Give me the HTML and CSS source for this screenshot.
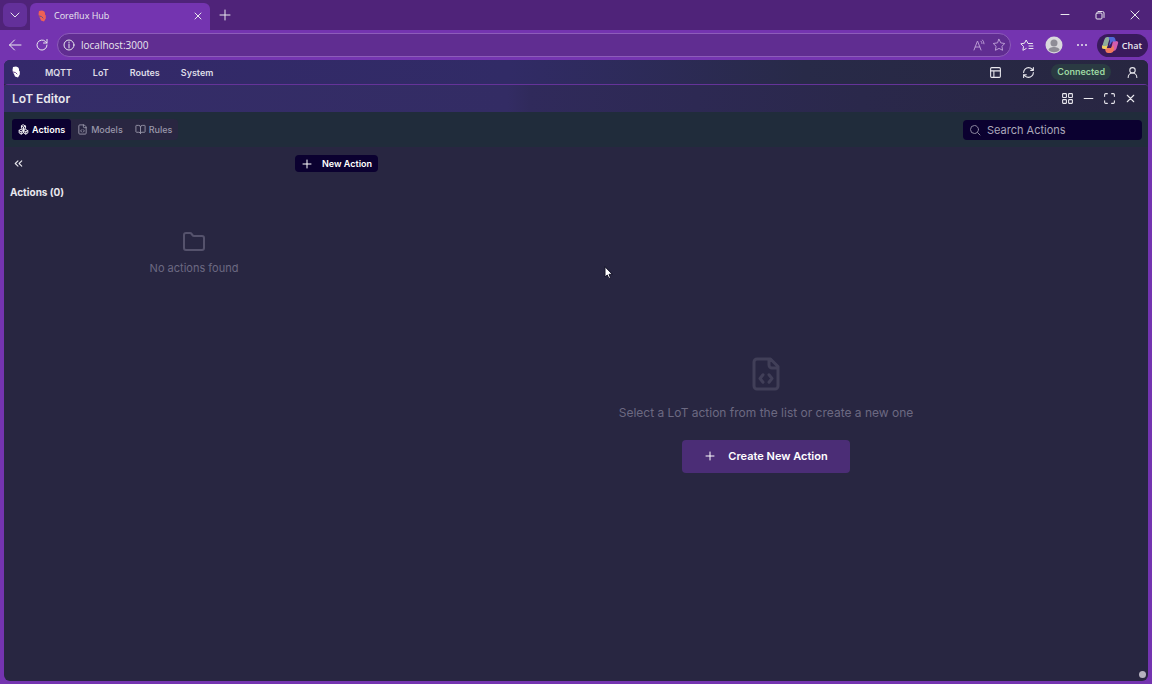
FILE: index.html
```html
<!DOCTYPE html>
<html lang="en">
<head>
    <meta charset="UTF-8">
    <meta name="viewport" content="width=device-width, initial-scale=1.0">
    <title>Coreflux Hub</title>
    <link rel="stylesheet" href="styles.css">
</head>
<body>

    <div class="browser">
        <div class="tab-strip">
            <button type="button" class="tab-menu" aria-label="Tab actions">
                <svg width="12" height="12" viewBox="0 0 12 12"><path d="M2 4l4 4 4-4"/></svg>
            </button>
            <div class="tab">
                <svg class="tab-logo" width="12" height="12" viewBox="0 0 12 12"><path d="M3 1l3-.5c2 .3 3 1.500 3 3v1l.8 1v3L8 11.500 5 10.500 4 8 3 6.500 2.500 4z"/><path class="logo-cut" d="M3 6l2.500.5L7 8"/></svg>
                <span class="tab-title">Coreflux Hub</span>
                <button type="button" class="plain" aria-label="Close tab">
                    <svg width="10" height="10" viewBox="0 0 10 10"><path d="M2 2l6 6M8 2L2 8"/></svg>
                </button>
            </div>
            <button type="button" class="plain new-tab" aria-label="New tab">
                <svg width="14" height="14" viewBox="0 0 14 14"><path d="M7 2v10M2 7h10"/></svg>
            </button>
            <div class="window-buttons">
                <button type="button" class="plain" aria-label="Minimize"><svg width="12" height="12" viewBox="0 0 12 12"><path d="M2 5.500h8"/></svg></button>
                <button type="button" class="plain" aria-label="Restore"><svg width="12" height="12" viewBox="0 0 12 12"><rect x="2" y="4" width="6" height="6" rx="1"/><path d="M4 2.500h4.500a1.500 1.500 0 0 1 1.500 1.500v4.500"/></svg></button>
                <button type="button" class="plain" aria-label="Close"><svg width="12" height="12" viewBox="0 0 12 12"><path d="M2 2l8 8M10 2l-8 8"/></svg></button>
            </div>
        </div>

        <div class="toolbar">
            <button type="button" class="plain" aria-label="Back"><svg width="14" height="14" viewBox="0 0 14 14"><path d="M13 7H1.500M6.500 2l-5 5 5 5"/></svg></button>
            <button type="button" class="plain" aria-label="Reload"><svg width="14" height="14" viewBox="0 0 14 14"><path d="M12 7a5 5 0 1 1-1.500-3.500L12 5M12 1.500V5H8.500"/></svg></button>
            <div class="address">
                <svg width="12" height="12" viewBox="0 0 12 12"><circle cx="6" cy="6" r="5"/><path d="M6 5.300V9M6 3v1"/></svg>
                <input type="text" class="address-input" value="localhost:3000" aria-label="Address">
                <button type="button" class="plain faded" aria-label="Read aloud"><svg width="14" height="14" viewBox="0 0 14 14"><path d="M2 12L5.500 3 9 12M3.200 9h4.600M9 3.200q1 1 1 2.300M10.500 2q1.500 1.500 1.500 3.800"/></svg></button>
                <button type="button" class="plain faded" aria-label="Add to favorites"><svg width="14" height="14" viewBox="0 0 14 14"><path d="M7 1.300l1.800 3.600 4 .6-2.900 2.800.7 4L7 10.400l-3.600 1.900.7-4L1.200 5.500l4-.6z"/></svg></button>
            </div>
            <button type="button" class="plain" aria-label="Favorites"><svg width="14" height="14" viewBox="0 0 14 14"><path d="M12.500 5.500H8L6.200 2 4.500 5.200l-3.700.6 2.700 2.600-.6 3.900 3.300-1.800M9 8h4M9 10.500h4"/></svg></button>
            <button type="button" class="plain profile" aria-label="Profile"><svg width="18" height="18" viewBox="0 0 18 18"><circle class="face-bg" cx="9" cy="9" r="8.500"/><circle class="face" cx="9" cy="7" r="3.500"/><path class="face" d="M3.500 14c0-4 11-4 11 0-3 3-8 3-11 0z"/></svg></button>
            <button type="button" class="plain more" aria-label="More"><svg width="12" height="12" viewBox="0 0 12 12"><circle class="dot" cx="2" cy="6" r="1"/><circle class="dot" cx="6" cy="6" r="1"/><circle class="dot" cx="10" cy="6" r="1"/></svg></button>
            <button type="button" class="chat">
                <svg width="18" height="18" viewBox="0 0 18 18">
                    <path class="copilot pink" d="M12 5h3q2.800 0 2 2.500l-1.500 5Q14.700 15 12 15l-2-2z"/>
                    <path class="copilot orange" d="M4 12h6l2.500-3 .5 5q-.8 3-3 3H7q-2 0-2.500-2z"/>
                    <path class="copilot yellow" d="M1.500 9l-.5 1.500Q.500 13 3 13h2.500L7 8.500z"/>
                    <path class="copilot green" d="M6 1q-2 .2-2.800 3L1.300 10H5q1.500 0 2-2l1.500-5q.5-2 2-2z"/>
                    <path class="copilot blue" d="M7.500 1H12q2 0 2.500 3l.5 1.500h-3q-1.500 0-2 2L8 10l1-5z"/>
                </svg>
                Chat
            </button>
        </div>

        <div class="page">
            <header class="navbar">
                <svg class="brand" width="12" height="12" viewBox="0 0 12 12"><path d="M3 1l3-.5c2 .3 3 1.500 3 3v1l.8 1v3L8 11.500 5 10.500 4 8 3 6.500 2.500 4z"/><path class="logo-cut" d="M3 6l2.500.5L7 8"/></svg>
                <nav class="nav-links">
                    <a href="#">MQTT</a>
                    <a href="#">LoT</a>
                    <a href="#">Routes</a>
                    <a href="#">System</a>
                </nav>
                <button type="button" class="plain" aria-label="Layout"><svg width="13" height="13" viewBox="0 0 24 24"><rect x="3" y="3" width="18" height="18" rx="2"/><path d="M3 9h18M9 21V9"/></svg></button>
                <button type="button" class="plain refresh" aria-label="Refresh"><svg width="13" height="13" viewBox="0 0 24 24"><path d="M3 12a9 9 0 0 1 9-9 9.750 9.750 0 0 1 6.740 2.740L21 8M21 3v5h-5M21 12a9 9 0 0 1-9 9 9.750 9.750 0 0 1-6.740-2.740L3 16M8 16H3v5"/></svg></button>
                <span class="status">Connected</span>
                <button type="button" class="plain" aria-label="Account"><svg width="13" height="13" viewBox="0 0 24 24"><circle cx="12" cy="8" r="5"/><path d="M20 21a8 8 0 0 0-16 0"/></svg></button>
            </header>

            <main class="editor">
                <div class="title-bar">
                    <h1>LoT Editor</h1>
                    <button type="button" class="plain" aria-label="Arrange"><svg width="13" height="13" viewBox="0 0 24 24"><rect x="3" y="3" width="7" height="7" rx="1"/><rect x="14" y="3" width="7" height="7" rx="1"/><rect x="14" y="14" width="7" height="7" rx="1"/><rect x="3" y="14" width="7" height="7" rx="1"/></svg></button>
                    <button type="button" class="plain" aria-label="Minimize editor"><svg width="13" height="13" viewBox="0 0 24 24"><path d="M4 12h16"/></svg></button>
                    <button type="button" class="plain" aria-label="Maximize editor"><svg width="13" height="13" viewBox="0 0 24 24"><path d="M8 3H5a2 2 0 0 0-2 2v3M21 8V5a2 2 0 0 0-2-2h-3M3 16v3a2 2 0 0 0 2 2h3M16 21h3a2 2 0 0 0 2-2v-3"/></svg></button>
                    <button type="button" class="plain" aria-label="Close editor"><svg width="13" height="13" viewBox="0 0 24 24"><path d="M18 6L6 18M6 6l12 12"/></svg></button>
                </div>

                <div class="filter-bar">
                    <div class="filter-tabs">
                        <button type="button" class="filter active"><svg width="11" height="11" viewBox="0 0 24 24"><path d="M12 2l4.500 2.500v5L12 12 7.500 9.500v-5zM7 12l4.500 2.500v5L7 22l-4.500-2.500v-5zM17 12l4.500 2.500v5L17 22l-4.500-2.500v-5zM7.500 4.500L12 7l4.500-2.500M12 7v5M2.500 14.500L7 17l4.500-2.500M7 17v5M12.500 14.500L17 17l4.500-2.500M17 17v5"/></svg>Actions</button>
                        <button type="button" class="filter"><svg width="11" height="11" viewBox="0 0 24 24"><path d="M15 2H6a2 2 0 0 0-2 2v16a2 2 0 0 0 2 2h12a2 2 0 0 0 2-2V7zM14 2v4a2 2 0 0 0 2 2h4M10 12.500L8 15l2 2.500M14 12.500l2 2.500-2 2.500"/></svg>Models</button>
                        <button type="button" class="filter"><svg width="11" height="11" viewBox="0 0 24 24"><path d="M12 7v14M3 18a1 1 0 0 1-1-1V4a1 1 0 0 1 1-1h5a4 4 0 0 1 4 4 4 4 0 0 1 4-4h5a1 1 0 0 1 1 1v13a1 1 0 0 1-1 1h-6a3 3 0 0 0-3 3 3 3 0 0 0-3-3z"/></svg>Rules</button>
                    </div>
                    <label class="search">
                        <svg width="12" height="12" viewBox="0 0 24 24"><circle cx="11" cy="11" r="8"/><path d="M22 22l-5-5"/></svg>
                        <input type="text" placeholder="Search Actions" aria-label="Search Actions">
                    </label>
                </div>

                <div class="content">
                    <section class="sidebar">
                        <div class="sidebar-top">
                            <button type="button" class="plain" aria-label="Collapse list"><svg width="13" height="13" viewBox="0 0 24 24"><path d="M11 17l-5-5 5-5M18 17l-5-5 5-5"/></svg></button>
                            <button type="button" class="new-action"><svg width="12" height="12" viewBox="0 0 24 24"><path d="M4 12h16M12 4v16"/></svg>New Action</button>
                        </div>
                        <h2>Actions (0)</h2>
                        <div class="empty-list">
                            <svg width="24" height="24" viewBox="0 0 24 24"><path d="M20 20a2 2 0 0 0 2-2V8a2 2 0 0 0-2-2h-7.900a2 2 0 0 1-1.690-.9L9.600 3.900A2 2 0 0 0 7.930 3H4a2 2 0 0 0-2 2v13a2 2 0 0 0 2 2z"/></svg>
                            <p>No actions found</p>
                        </div>
                    </section>
                    <section class="detail">
                        <svg class="detail-icon" width="36" height="36" viewBox="0 0 24 24"><path d="M15 2H6a2 2 0 0 0-2 2v16a2 2 0 0 0 2 2h12a2 2 0 0 0 2-2V7zM14 2v4a2 2 0 0 0 2 2h4M10 12.500L8 15l2 2.500M14 12.500l2 2.500-2 2.500"/></svg>
                        <p>Select a LoT action from the list or create a new one</p>
                        <button type="button" class="create"><svg width="12" height="12" viewBox="0 0 24 24"><path d="M4 12h16M12 4v16"/></svg>Create New Action</button>
                    </section>
                    <span class="activity-dot"></span>
                </div>
            </main>
        </div>
    </div>

    <svg class="cursor" width="9" height="14" viewBox="0 0 9 14"><path d="M1 1v10l2.300-2 1.500 3.500 1.700-.8L5 8.300h3z"/></svg>

</body>
</html>
```
FILE: styles.css
```css
* {
    box-sizing: border-box;
}

body {
    margin: 0;
    font-family: Inter, "Liberation Sans", sans-serif;
    color: #e9e8ee;
    background-color: #7434b0;
}

h1, h2, p {
    margin: 0;
}

button, input {
    font-family: inherit;
    color: inherit;
}

button {
    display: flex;
    align-items: center;
    border: none;
    padding: 0;
    cursor: pointer;
}

svg {
    display: block;
    flex: none;
    fill: none;
    stroke: currentColor;
    stroke-width: 2;
    stroke-linecap: round;
    stroke-linejoin: round;
}

.plain {
    background: none;
}

.browser {
    display: flex;
    flex-direction: column;
    min-height: 100vh;
}

/* Browser tabs and address bar */
.tab-strip,
.toolbar {
    display: flex;
    align-items: center;
    height: 30px;
    font-family: "Open Sans", "Noto Sans", sans-serif;
}

.tab-strip svg,
.toolbar svg {
    stroke-width: 1;
}

.tab-strip {
    background-color: #4f2379;
    padding: 0 11px 0 3px;
}

.tab-menu {
    justify-content: center;
    width: 24px;
    height: 24px;
    background-color: #63309a;
    border-radius: 6px;
}

.tab {
    display: flex;
    align-items: center;
    width: 180px;
    height: 27px;
    margin: 3px 8px 0 3px;
    padding: 0 7px 2px 6px;
    background-color: #7434b0;
    border-radius: 6px 6px 0 0;
}

.tab-title {
    flex: 1;
    margin-left: 6px;
    font-size: 9px;
    font-weight: 500;
}

.tab .tab-logo {
    fill: #ee6155;
    stroke: none;
}

.window-buttons {
    display: flex;
    gap: 23px;
    margin-left: auto;
}

.toolbar {
    gap: 13px;
    padding: 0 4px 0 8px;
    background-color: #7434b0;
}

.address {
    display: flex;
    flex: 1;
    align-items: center;
    gap: 6px;
    height: 24px;
    margin: 0 -4px 0 -5px;
    padding: 0 4px 0 5px;
    background-color: #602d91;
    border: 1px solid #8d5cba;
    border-radius: 12px;
}

.address-input {
    flex: 1;
    min-width: 0;
    padding: 0;
    background: none;
    border: none;
    font-size: 10px;
}

.faded {
    color: #b99ad3;
}

.profile {
    margin-left: -2px;
}

.profile .face-bg {
    fill: #d9d8dc;
    stroke: none;
}

.profile .face {
    fill: #8e8c96;
    stroke: none;
}

.more .dot {
    fill: currentColor;
    stroke: none;
}

.chat {
    gap: 3px;
    height: 23px;
    padding: 0 6px 0 4px;
    margin-left: -4px;
    background-color: #391a5c;
    border-radius: 12px;
    font-size: 9px;
    font-weight: 600;
}

.chat .copilot {
    stroke: none;
}

.blue { fill: #5068d8; }
.green { fill: #8fae9b; }
.yellow { fill: #f0cf60; }
.orange { fill: #f0785c; }
.pink { fill: #d45cae; }

/* Page */
.page {
    display: flex;
    flex: 1;
    flex-direction: column;
    margin: 0 4px 3px;
    overflow: hidden;
    background-color: #282641;
    border-radius: 6px;
}

.navbar {
    display: flex;
    align-items: center;
    height: 24px;
    padding: 0 9px 0 6px;
    background: linear-gradient(90deg, #34296a, #312b66 44%, #282a48 70%, #272640);
}

.brand {
    fill: #ffffff;
    stroke: none;
}

.logo-cut {
    fill: none;
    stroke: #6b4a8c;
}

.nav-links {
    display: flex;
    flex: 1;
    gap: 21px;
    margin-left: 23px;
}

.nav-links a {
    color: #dddce6;
    font-size: 9px;
    font-weight: 600;
    text-decoration: none;
}

.navbar .logo-cut {
    stroke-width: 1;
}

.refresh {
    margin-left: 20px;
}

.status {
    margin: 0 15px 0 16px;
    padding: 1px 6px;
    background-color: #2a3a42;
    border-radius: 8px;
    color: #9bd6a0;
    font-size: 9px;
    font-weight: 600;
    line-height: 14px;
}

.editor {
    display: flex;
    flex: 1;
    flex-direction: column;
    overflow: hidden;
    border-top: 1px solid #653399;
    border-radius: 4px 4px 0 0;
}

.title-bar {
    display: flex;
    align-items: center;
    gap: 8px;
    height: 27px;
    padding: 0 11px 0 8px;
    background: linear-gradient(90deg, #352d69, #332c64 44%, #302a5b 46%, #2a284b 75%, #282641);
}

.title-bar h1 {
    flex: 1;
    font-size: 12px;
    font-weight: 600;
}

.filter-bar {
    display: flex;
    align-items: center;
    justify-content: space-between;
    height: 35px;
    padding: 0 6px 0 8px;
    background-color: #202c3b;
}

.filter-tabs {
    display: flex;
    background-color: #292641;
    border-radius: 4px;
}

.filter {
    gap: 3px;
    height: 21px;
    padding: 0 6px;
    background: none;
    border-radius: 3px;
    color: #9997aa;
    font-size: 9px;
    font-weight: 500;
}

.filter.active {
    background-color: #0b0130;
    color: #ffffff;
    font-weight: 600;
}

.search {
    display: flex;
    align-items: center;
    gap: 6px;
    width: 179px;
    height: 20px;
    padding: 0 6px;
    background-color: #0b0130;
    border-radius: 4px;
    color: #8b879e;
}

.search input {
    flex: 1;
    min-width: 0;
    padding: 0;
    background: none;
    border: none;
    font-size: 11px;
}

.search input::placeholder {
    color: #aaa7b9;
}

.content {
    position: relative;
    display: flex;
    flex: 1;
}

.sidebar {
    width: 380px;
    padding: 8px 6px;
}

.sidebar-top {
    display: flex;
    align-items: center;
    justify-content: space-between;
    padding-left: 2px;
}

.new-action {
    gap: 9px;
    height: 17px;
    padding: 0 6px;
    background-color: #0b0130;
    border-radius: 4px;
    color: #ffffff;
    font-size: 9px;
    font-weight: 600;
}

.sidebar h2 {
    margin-top: 12px;
    font-size: 10px;
    font-weight: 700;
    line-height: 16px;
}

.empty-list {
    display: flex;
    flex-direction: column;
    align-items: center;
    gap: 6px;
    margin-top: 30px;
    color: #6c6981;
    font-size: 11px;
    line-height: 16px;
}

.empty-list svg {
    color: #55526c;
}

.detail {
    display: flex;
    flex: 1;
    flex-direction: column;
    align-items: center;
    justify-content: center;
    color: #6c6981;
    font-size: 12px;
    line-height: 16px;
}

.detail-icon {
    color: #413f58;
}

.detail p {
    margin: 13px 0 19px;
}

.create {
    gap: 12px;
    height: 33px;
    padding: 0 22px;
    background-color: #4b2d76;
    border-radius: 4px;
    color: #ffffff;
    font-size: 11px;
    font-weight: 600;
}

.activity-dot {
    position: absolute;
    right: 2px;
    bottom: 3px;
    width: 7px;
    height: 7px;
    background-color: #b5b1bf;
    border-radius: 50%;
}

/* Mouse pointer over the page */
.cursor {
    position: absolute;
    left: 604px;
    top: 266px;
    fill: #ffffff;
    stroke: #16142a;
    stroke-width: 1;
}
```
